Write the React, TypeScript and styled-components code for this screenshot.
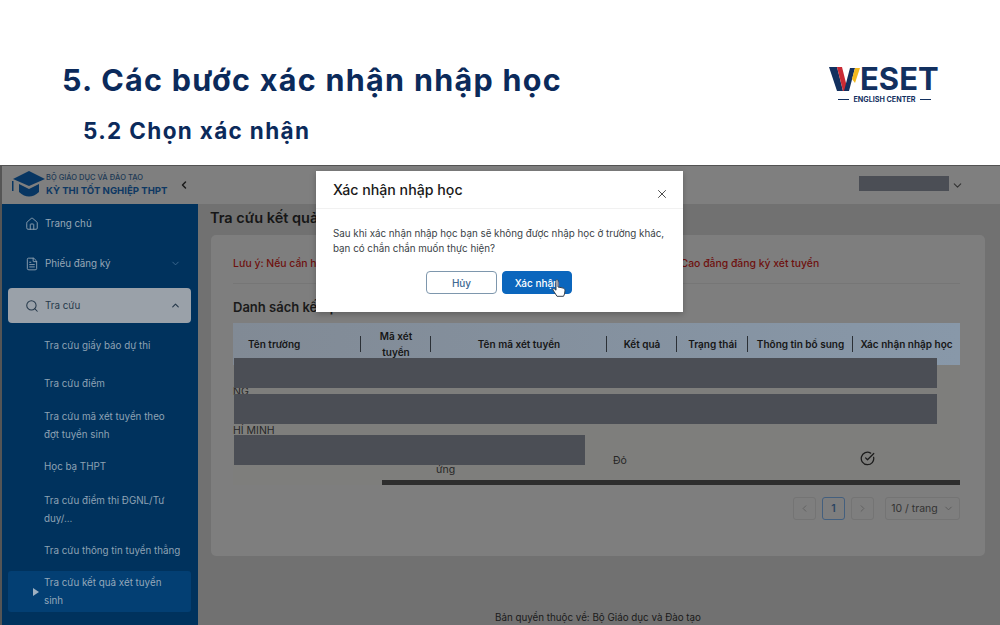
import { createGlobalStyle } from 'styled-components';
import styled from 'styled-components';
import { ChevronDown, ChevronLeft, ChevronRight, ChevronUp, CircleCheckBig, FileText, Home, Search, X } from 'lucide-react';

const COLUMNS = '128px 70px 176px 70px 71px 105px 107px';

const subItems = [
  { label: 'Tra cứu giấy báo dự thi', height: 38 },
  { label: 'Tra cứu điểm', height: 38 },
  { label: 'Tra cứu mã xét tuyển theo đợt tuyển sinh', height: 45 },
  { label: 'Học bạ THPT', height: 37 },
  { label: 'Tra cứu điểm thi ĐGNL/Tư duy/...', height: 50 },
  { label: 'Tra cứu thông tin tuyển thẳng', height: 31 },
];

const headers = ['Tên trường', 'Mã xét tuyển', 'Tên mã xét tuyển', 'Kết quả', 'Trạng thái', 'Thông tin bổ sung', 'Xác nhận nhập học'];

function App() {
  return (
    <Page>
      <GlobalStyle />
      <Intro>
        <Headings>
          <Title>5. Các bước xác nhận nhập học</Title>
          <SubTitle>5.2 Chọn xác nhận</SubTitle>
        </Headings>
        <Brand>
          <BrandTop>
            <svg width="31" height="24" viewBox="0 0 31 24">
              <polygon points="0,0 8,0 14,24 8,24" fill="#12305f" />
              <polygon points="8,0 13,0 19,24 14,24" fill="#c92a34" />
              <polygon points="15,24 20,24 26,1 21,1" fill="#12305f" />
              <polygon points="23,12 26,1 31,1 26,16" fill="#f2b91f" />
            </svg>
            <BrandWord>ESET</BrandWord>
          </BrandTop>
          <BrandLine>
            <Dash />
            <span>ENGLISH CENTER</span>
            <Dash />
          </BrandLine>
        </Brand>
      </Intro>

      <Screen>
        <TopBar>
          <PortalLogo>
            <svg width="33" height="28" viewBox="0 0 33 28">
              <polygon points="17,0 33,8 17,15 1,8" fill="#083662" />
              <path d="M7 13 L17 18 L27 13 L27 21 Q17 30 7 21 Z" fill="#083662" />
              <rect x="0" y="10" width="1.5" height="10" fill="#083662" />
            </svg>
            <PortalText>
              <PortalSmall>BỘ GIÁO DỤC VÀ ĐÀO TẠO</PortalSmall>
              <PortalBig>KỲ THI TỐT NGHIỆP THPT</PortalBig>
            </PortalText>
            <ChevronLeft size={12} strokeWidth={3} color="#1b1b1b" />
          </PortalLogo>
          <Account>
            <Redacted />
            <ChevronDown size={13} color="#333" />
          </Account>
        </TopBar>

        <Body>
          <Sidebar>
            <MenuRow>
              <Home size={14} strokeWidth={1.5} />
              <span>Trang chủ</span>
            </MenuRow>
            <MenuRow>
              <FileText size={14} strokeWidth={1.5} />
              <span>Phiếu đăng ký</span>
              <MenuChevron>
                <ChevronDown size={11} color="#3f6a90" />
              </MenuChevron>
            </MenuRow>
            <ActiveMenu>
              <Search size={14} strokeWidth={1.8} />
              <span>Tra cứu</span>
              <MenuChevron>
                <ChevronUp size={11} strokeWidth={2.5} />
              </MenuChevron>
            </ActiveMenu>
            {subItems.map((item) => (
              <SubItem key={item.label} $height={item.height}>
                {item.label}
              </SubItem>
            ))}
            <CurrentItem>
              <Arrow />
              <span>Tra cứu kết quả xét tuyển sinh</span>
            </CurrentItem>
          </Sidebar>

          <Main>
            <PageTitle>Tra cứu kết quả xét tuyển sinh</PageTitle>
            <Card>
              <Note>Lưu ý: Nếu cần hỗ trợ về kết quả xét tuyển, thí sinh vui lòng liên hệ với các trường Đại học, Cao đẳng đăng ký xét tuyển</Note>
              <SectionTitle>Danh sách kết quả</SectionTitle>
              <Table>
                <HeadRow>
                  {headers.map((h) => (
                    <HeadCell key={h}>{h}</HeadCell>
                  ))}
                </HeadRow>
                <DataRow $height={33}>
                  <Cell>NG</Cell>
                </DataRow>
                <DataRow $height={39}>
                  <Cell>HÍ MINH</Cell>
                </DataRow>
                <LastRow>
                  <Cell />
                  <Cell />
                  <WrapCell>ứng</WrapCell>
                  <ResultCell>Đỏ</ResultCell>
                  <Cell />
                  <Cell />
                  <CheckCell>
                    <CircleCheckBig size={15} color="#1c1c1c" />
                  </CheckCell>
                </LastRow>
                <Scrollbar />
                <MaskLong $top={35} />
                <MaskLong $top={71} />
                <MaskShort />
              </Table>
              <Pager>
                <PageButton><ChevronLeft size={11} color="#5f5f5f" /></PageButton>
                <CurrentPage>1</CurrentPage>
                <PageButton><ChevronRight size={11} color="#5f5f5f" /></PageButton>
                <PageSize>
                  10 / trang
                  <ChevronDown size={11} color="#5a5a5a" />
                </PageSize>
              </Pager>
            </Card>
            <Copyright>Bản quyền thuộc về: Bộ Giáo dục và Đào tạo</Copyright>
          </Main>
        </Body>

        <Modal>
          <ModalHead>
            <ModalTitle>Xác nhận nhập học</ModalTitle>
            <CloseIcon>
              <X size={14} strokeWidth={1.5} color="#333" />
            </CloseIcon>
          </ModalHead>
          <ModalBody>
            <ModalText>
              Sau khi xác nhận nhập học bạn sẽ không được nhập học ở trường khác,
              <br />
              bạn có chắn chắn muốn thực hiện?
            </ModalText>
            <ModalActions>
              <CancelButton>Hủy</CancelButton>
              <ConfirmButton>Xác nhận</ConfirmButton>
              <Cursor>
                <svg width="14" height="18" viewBox="0 0 14 18">
                  <path
                    d="M4 1.5c0-1 2-1 2 0V8l4 .8c2 .4 3 1 3 3l-.5 3.2-1 2.3H5L1 11c-.6-1 .6-2 1.6-1L4 11.2Z"
                    fill="#fff"
                    stroke="#37424f"
                    strokeWidth="1"
                  />
                </svg>
              </Cursor>
            </ModalActions>
          </ModalBody>
        </Modal>
      </Screen>
    </Page>
  );
}

const GlobalStyle = createGlobalStyle`
  html, body {
    margin: 0;
    padding: 0;
    background: #ffffff;
  }
  * {
    box-sizing: border-box;
  }
`;

const Page = styled.div`
  width: 1000px;
  height: 625px;
  overflow: hidden;
  font-family: Inter, 'Noto Sans', sans-serif;
`;

const Intro = styled.header`
  height: 165px;
  display: flex;
  justify-content: space-between;
  padding: 62px 60px 0 62px;
`;

const Headings = styled.div`
  display: flex;
  flex-direction: column;
`;

const Title = styled.h1`
  margin: 0;
  font-size: 30.5px;
  line-height: 36px;
  font-weight: 700;
  letter-spacing: 1.3px;
  color: #0b2a5b;
`;

const SubTitle = styled.h2`
  margin: 19px 0 0 21px;
  font-size: 22.5px;
  line-height: 28px;
  font-weight: 700;
  letter-spacing: 1.35px;
  color: #0b2a5b;
`;

const Brand = styled.div`
  width: 111px;
  margin-top: 5px;
  display: flex;
  flex-direction: column;
  align-items: center;
`;

const BrandTop = styled.div`
  display: flex;
  align-items: flex-start;
  height: 25px;
  width: 100%;
`;

const BrandWord = styled.span`
  font-size: 31px;
  line-height: 24px;
  font-weight: 700;
  color: #12305f;
`;

const BrandLine = styled.div`
  display: flex;
  align-items: center;
  gap: 4px;
  margin-top: 3px;
  font-size: 7.2px;
  line-height: 9px;
  font-weight: 700;
  color: #12305f;
`;

const Dash = styled.i`
  display: block;
  width: 11px;
  height: 1px;
  background: #12305f;
`;

const Screen = styled.section`
  position: relative;
  height: 460px;
  background: #717171;
  border-left: 2px solid #555555;
  border-top: 1px solid #525252;
`;

const TopBar = styled.div`
  height: 38px;
  background: #7f7f7f;
  display: flex;
  align-items: center;
  justify-content: space-between;
  padding: 0 36px 0 10px;
`;

const PortalLogo = styled.div`
  display: flex;
  align-items: center;
  gap: 1px;
`;

const PortalText = styled.div`
  display: flex;
  flex-direction: column;
  margin-right: 10px;
`;

const PortalSmall = styled.span`
  font-size: 7.5px;
  line-height: 11px;
  font-weight: 500;
  color: #1d3955;
`;

const PortalBig = styled.span`
  font-size: 9.6px;
  line-height: 16px;
  font-weight: 700;
  color: #0e3863;
`;

const Account = styled.div`
  display: flex;
  align-items: center;
  gap: 2px;
`;

const Redacted = styled.div`
  width: 90px;
  height: 15px;
  margin-bottom: 3px;
  background: #4b4e55;
`;

const Body = styled.div`
  display: flex;
  height: 421px;
`;

const Sidebar = styled.nav`
  width: 196px;
  flex-shrink: 0;
  background: #00325d;
  padding: 0 7px 0 6px;
  color: #8c9fb1;
  font-size: 9.8px;
  overflow: hidden;
`;

const MenuRow = styled.div`
  height: 41px;
  display: flex;
  align-items: center;
  gap: 6px;
  padding: 0 10px 0 17px;
  color: #97a7b6;
  &:first-child {
    height: 39px;
  }
`;

const ActiveMenu = styled(MenuRow)`
  height: 35px;
  margin-top: 4px;
  margin-bottom: 4px;
  background: #9aa1a9;
  border-radius: 4px;
  color: #26394b;
`;

const MenuChevron = styled.span`
  margin-left: auto;
  display: flex;
`;

const SubItem = styled.div<{ $height: number }>`
  height: ${(p) => p.$height}px;
  display: flex;
  align-items: center;
  padding: 0 10px 0 36px;
  line-height: 18px;
  color: #8ea2b4;
`;

const CurrentItem = styled.div`
  position: relative;
  height: 41px;
  margin-top: 5px;
  display: flex;
  align-items: center;
  padding: 0 24px 0 36px;
  line-height: 18px;
  border-radius: 3px;
  background: #033f73;
  color: #94a8ba;
`;

const Arrow = styled.i`
  position: absolute;
  left: 25px;
  top: 17px;
  border-left: 6px solid #9fb1c2;
  border-top: 4px solid transparent;
  border-bottom: 4px solid transparent;
`;

const Main = styled.main`
  flex: 1;
  min-width: 0;
  display: flex;
  flex-direction: column;
  padding: 5px 15px 0 12px;
`;

const PageTitle = styled.div`
  font-size: 14.5px;
  line-height: 18px;
  font-weight: 600;
  color: #161616;
  white-space: nowrap;
`;

const Card = styled.div`
  margin: 8px 0 0 1px;
  height: 323px;
  background: #7e7e7e;
  border-radius: 5px;
  padding: 20px 0 0 22px;
`;

const Note = styled.div`
  height: 29px;
  width: 727px;
  font-size: 10.4px;
  line-height: 18px;
  color: #6e110e;
  font-weight: 500;
  border-bottom: 1px solid #767676;
  white-space: nowrap;
`;

const SectionTitle = styled.div`
  margin-top: 14px;
  font-size: 13px;
  line-height: 18px;
  font-weight: 600;
  color: #1a1a1a;
`;

const Table = styled.div`
  position: relative;
  width: 727px;
  margin-top: 7px;
  overflow: hidden;
  background: #7e7e7c;
`;

const HeadRow = styled.div`
  height: 42px;
  display: grid;
  grid-template-columns: ${COLUMNS};
  background: linear-gradient(90deg, #818a95, #8898a9);
`;

const HeadCell = styled.div`
  display: flex;
  align-items: center;
  justify-content: center;
  text-align: center;
  font-size: 10px;
  line-height: 16px;
  font-weight: 600;
  color: #161616;
  padding: 0;
  white-space: nowrap;
  position: relative;
  &:nth-child(2) {
    white-space: normal;
    padding: 0 14px;
  }
  &:not(:last-child)::after {
    content: '';
    position: absolute;
    right: 0;
    top: 13px;
    width: 1px;
    height: 16px;
    background: #2b3036;
  }
  &:first-child {
    justify-content: flex-start;
    padding-left: 15px;
  }
`;

const DataRow = styled.div<{ $height: number }>`
  height: ${(p) => p.$height}px;
  display: flex;
  align-items: flex-end;
  font-size: 10.5px;
  line-height: 12px;
  color: #262626;
`;

const Cell = styled.div`
  min-width: 0;
`;

const LastRow = styled.div`
  height: 43px;
  display: grid;
  grid-template-columns: ${COLUMNS};
  font-size: 10.5px;
  line-height: 12px;
  color: #262626;
`;

const WrapCell = styled.div`
  padding: 27px 0 0 5px;
`;

const ResultCell = styled.div`
  padding: 18px 0 0 6px;
`;

const CheckCell = styled.div`
  padding: 14px 0 0 7px;
`;

const Scrollbar = styled.div`
  height: 5px;
  margin-left: 149px;
  background: #2e2e2e;
`;

const MaskLong = styled.div<{ $top: number }>`
  position: absolute;
  left: 1px;
  top: ${(p) => p.$top}px;
  width: 703px;
  height: 30px;
  background: #4b4e55;
`;

const MaskShort = styled.div`
  position: absolute;
  left: 1px;
  top: 112px;
  width: 351px;
  height: 30px;
  background: #4b4e55;
`;

const Pager = styled.div`
  width: 727px;
  margin-top: 12px;
  display: flex;
  justify-content: flex-end;
  align-items: center;
  gap: 6px;
`;

const PageButton = styled.div`
  width: 23px;
  height: 23px;
  border: 1px solid #747474;
  border-radius: 3px;
  display: flex;
  align-items: center;
  justify-content: center;
`;

const CurrentPage = styled(PageButton)`
  border-color: #435f7e;
  font-size: 10.5px;
  font-weight: 600;
  color: #2a4462;
`;

const PageSize = styled.div`
  width: 75px;
  height: 23px;
  margin-left: 5px;
  border: 1px solid #747474;
  border-radius: 3px;
  display: flex;
  align-items: center;
  justify-content: center;
  gap: 5px;
  font-size: 10.5px;
  color: #333333;
`;

const Copyright = styled.div`
  margin-top: 55px;
  margin-left: 88px;
  width: 600px;
  text-align: center;
  font-size: 9.8px;
  line-height: 14px;
  color: #1a1a1a;
`;

const Modal = styled.div`
  position: absolute;
  left: 314px;
  top: 5px;
  width: 367px;
  height: 141px;
  background: #ffffff;
  box-shadow: 0 2px 6px rgba(0, 0, 0, 0.25);
`;

const ModalHead = styled.div`
  height: 38px;
  display: flex;
  align-items: center;
  justify-content: space-between;
  padding: 0 14px 0 17px;
  border-bottom: 1px solid #f1f1f1;
`;

const ModalTitle = styled.div`
  font-size: 14.2px;
  line-height: 20px;
  font-weight: 500;
  color: #1a1a1a;
`;

const CloseIcon = styled.span`
  display: flex;
  margin-top: 8px;
`;

const ModalBody = styled.div`
  padding: 17px 0 0 17px;
`;

const ModalText = styled.p`
  margin: 0;
  font-size: 9.8px;
  line-height: 15px;
  color: #3a3f46;
  white-space: nowrap;
`;

const ModalActions = styled.div`
  position: relative;
  margin-top: 15px;
  display: flex;
  justify-content: center;
  gap: 5px;
  padding-right: 18px;
`;

const CancelButton = styled.button`
  width: 71px;
  height: 23px;
  padding: 0;
  border: 1px solid #7e97ad;
  border-radius: 4px;
  background: #ffffff;
  font: 500 10px Inter, sans-serif;
  color: #3e6a93;
`;

const ConfirmButton = styled(CancelButton)`
  width: 70px;
  border-color: #0b66bd;
  background: #0b66bd;
  color: #ffffff;
`;

const Cursor = styled.span`
  position: absolute;
  left: 219px;
  top: 8px;
  display: flex;
`;

export default App;
